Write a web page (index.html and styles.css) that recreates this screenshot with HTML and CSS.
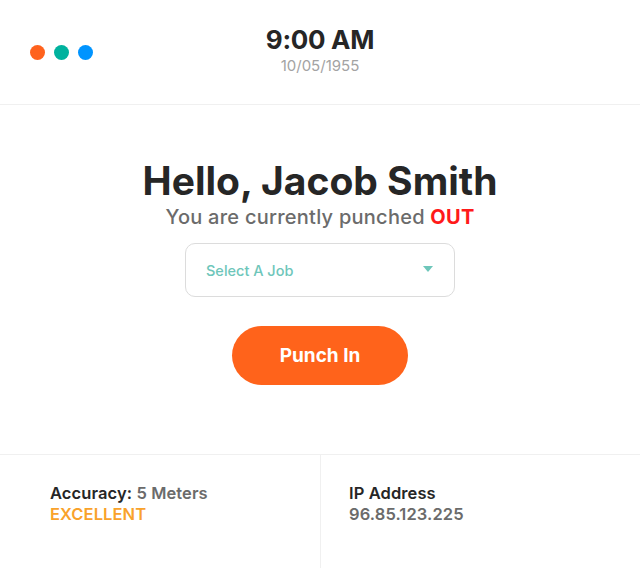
FILE: index.html
```html
<!DOCTYPE html>
<html>
<head>
<meta charset="utf-8">
<link rel="stylesheet" href="styles.css">
</head>
<body>
<div class="app">
  <header class="topbar">
    <div class="dots">
      <span class="dot dot-orange"></span>
      <span class="dot dot-teal"></span>
      <span class="dot dot-blue"></span>
    </div>
    <div class="clock">
      <div class="time">9:00 AM</div>
      <div class="date">10/05/1955</div>
    </div>
  </header>
  <main class="main">
    <h1 class="hello">Hello, Jacob Smith</h1>
    <p class="status">You are currently punched <span class="out">OUT</span></p>
    <div class="select">
      <span class="select-label">Select A Job</span>
      <span class="caret"></span>
    </div>
    <button class="punch">Punch In</button>
  </main>
  <footer class="info">
    <div class="cell">
      <div class="line"><span class="key">Accuracy:</span> <span class="val">5 Meters</span></div>
      <div class="line excellent">EXCELLENT</div>
    </div>
    <div class="cell cell-right">
      <div class="line key">IP Address</div>
      <div class="line val">96.85.123.225</div>
    </div>
  </footer>
</div>
</body>
</html>
```
FILE: styles.css
```css
* { box-sizing: border-box; }
html, body { margin: 0; padding: 0; background: #fff; }
body { font-family: Inter, Lato, sans-serif; color: #262626; }
.app { width: 640px; height: 568px; display: flex; flex-direction: column; }
.topbar {
  height: 105px;
  border-bottom: 1px solid #f0f0f0;
  display: flex;
  align-items: center;
  position: relative;
}
.dots { display: flex; gap: 9px; padding-left: 30px; padding-top: 0; }
.dot { width: 15px; height: 15px; border-radius: 50%; display: block; }
.dot-orange { background: #ff621d; }
.dot-teal { background: #00b29e; }
.dot-blue { background: #0094ff; }
.clock {
  position: absolute; left: 0; right: 0; top: 23px;
  text-align: center;
}
.time { font-size: 26px; font-weight: 700; color: #262626; line-height: 34px; letter-spacing: -0.3px; }
.date { font-size: 15px; color: #a3a3a3; line-height: 18px; letter-spacing: 0; }
.main {
  height: 349px;
  display: flex; flex-direction: column; align-items: center;
  padding-top: 52px;
}
.hello { margin: 0; font-size: 39px; font-weight: 700; line-height: 48px; color: #262626; letter-spacing: 0; }
.status { margin: 0; font-size: 20px; color: #6b6b6b; line-height: 24px; font-weight: 500; letter-spacing: 0.25px; }
.out { color: #ff1a1a; font-weight: 700; }
.select {
  margin-top: 14px;
  width: 270px; height: 54px;
  border: 1px solid #dcdcdc; border-radius: 10px;
  display: flex; align-items: center; justify-content: space-between;
  padding: 0 21px 0 20px;
}
.select-label { font-size: 14.5px; color: #6ec6ba; font-weight: 500; }
.caret {
  width: 0; height: 0;
  border-left: 5px solid transparent; border-right: 5px solid transparent;
  border-top: 6px solid #6ec6ba;
  margin-top: -2px;
}
.punch {
  margin-top: 29px;
  width: 176px; height: 59px;
  border: none; border-radius: 30px;
  background: #ff631b; color: #fff;
  font-family: inherit; font-size: 19px; font-weight: 700; letter-spacing: 0;
}
.info {
  flex: 1;
  border-top: 1px solid #f0f0f0;
  display: flex;
}
.cell { width: 321px; padding: 28px 0 0 50px; border-right: 1px solid #f0f0f0; }
.cell-right { flex: 1; border-right: none; padding-left: 28px; }
.line { font-size: 16.5px; line-height: 21px; font-weight: 600; letter-spacing: 0.1px; }
.key { color: #262626; }
.val { color: #6b6b6b; }
.excellent { color: #f9a22b; }
```
